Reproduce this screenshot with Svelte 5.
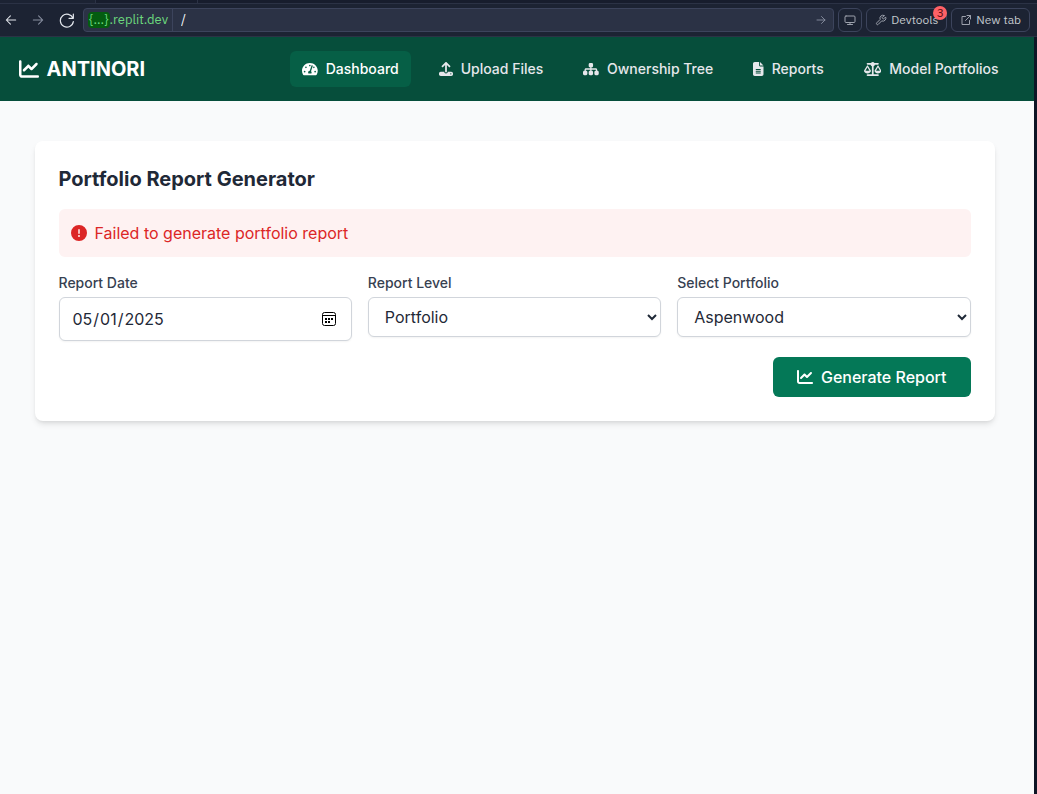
<script>
  const icons = {
    chart: { w: 512, d: 'M64 64c0-17.7-14.3-32-32-32S0 46.3 0 64V400c0 44.2 35.8 80 80 80H480c17.7 0 32-14.3 32-32s-14.3-32-32-32H80c-8.8 0-16-7.2-16-16V64zm406.6 86.6c12.5-12.5 12.5-32.8 0-45.3s-32.8-12.5-45.3 0L320 210.7l-57.4-57.4c-12.5-12.5-32.8-12.5-45.3 0l-112 112c-12.5 12.5-12.5 32.8 0 45.3s32.8 12.5 45.3 0L240 221.3l57.4 57.4c12.5 12.5 32.8 12.5 45.3 0l128-128z' },
    gauge: { w: 576, d: 'M288 32C128.94 32 0 160.94 0 320c0 52.8 14.25 102.26 39.06 144.8 5.61 9.62 16.3 15.2 27.44 15.2h443c11.14 0 21.83-5.58 27.44-15.2C561.75 422.26 576 372.8 576 320c0-159.06-128.94-288-288-288zm0 64c14.71 0 26.58 10.13 30.32 23.65-1.11 2.26-2.64 4.23-3.45 6.67l-9.22 27.67c-5.13 3.49-10.97 6.01-17.64 6.01-17.67 0-32-14.33-32-32S270.33 96 288 96zM96 384c-17.67 0-32-14.33-32-32s14.33-32 32-32 32 14.33 32 32-14.33 32-32 32zm48-160c-17.67 0-32-14.33-32-32s14.33-32 32-32 32 14.33 32 32-14.33 32-32 32zm246.77-72.41l-61.33 184C343.13 347.33 352 364.54 352 384c0 11.72-3.38 22.55-8.88 32H232.88c-5.5-9.45-8.88-20.28-8.88-32 0-33.94 26.5-61.43 59.9-63.59l61.34-184.01c4.17-12.56 17.73-19.45 30.36-15.17 12.57 4.19 19.35 17.79 15.17 30.36zm14.66 57.2l15.52-46.55c3.47-1.29 7.13-2.23 11.05-2.23 17.67 0 32 14.33 32 32s-14.33 32-32 32c-11.38-.01-20.89-6.28-26.57-15.22zM480 384c-17.67 0-32-14.33-32-32s14.33-32 32-32 32 14.33 32 32-14.33 32-32 32z' },
    upload: { w: 512, d: 'M288 109.3V352c0 17.7-14.3 32-32 32s-32-14.3-32-32V109.3l-73.4 73.4c-12.5 12.5-32.8 12.5-45.3 0s-12.5-32.8 0-45.3l128-128c12.5-12.5 32.8-12.5 45.3 0l128 128c12.5 12.5 12.5 32.8 0 45.3s-32.8 12.5-45.3 0L288 109.3zM64 352H192c0 35.3 28.7 64 64 64s64-28.7 64-64H448c35.3 0 64 28.7 64 64v32c0 35.3-28.7 64-64 64H64c-35.3 0-64-28.7-64-64V416c0-35.3 28.7-64 64-64zM432 456a24 24 0 1 0 0-48 24 24 0 1 0 0 48z' },
    tree: { w: 576, d: 'M208 80c0-26.5 21.5-48 48-48h64c26.5 0 48 21.5 48 48v64c0 26.5-21.5 48-48 48h-8v40H464c30.9 0 56 25.1 56 56v32h8c26.5 0 48 21.5 48 48v64c0 26.5-21.5 48-48 48H464c-26.5 0-48-21.5-48-48V368c0-26.5 21.5-48 48-48h8V288c0-4.4-3.6-8-8-8H312v40h8c26.5 0 48 21.5 48 48v64c0 26.5-21.5 48-48 48H256c-26.5 0-48-21.5-48-48V368c0-26.5 21.5-48 48-48h8V280H112c-4.4 0-8 3.6-8 8v32h8c26.5 0 48 21.5 48 48v64c0 26.5-21.5 48-48 48H48c-26.5 0-48-21.5-48-48V368c0-26.5 21.5-48 48-48h8V288c0-30.9 25.1-56 56-56H264V192h-8c-26.5 0-48-21.5-48-48V80z' },
    file: { w: 384, d: 'M64 0C28.7 0 0 28.7 0 64V448c0 35.3 28.7 64 64 64H320c35.3 0 64-28.7 64-64V160H256c-17.7 0-32-14.3-32-32V0H64zM256 0V128H384L256 0zM112 256H272c8.8 0 16 7.2 16 16s-7.2 16-16 16H112c-8.8 0-16-7.2-16-16s7.2-16 16-16zm0 64H272c8.8 0 16 7.2 16 16s-7.2 16-16 16H112c-8.8 0-16-7.2-16-16s7.2-16 16-16zm0 64H272c8.8 0 16 7.2 16 16s-7.2 16-16 16H112c-8.8 0-16-7.2-16-16s7.2-16 16-16z' },
    scale: { w: 640, d: 'M384 32H512c17.7 0 32 14.3 32 32s-14.3 32-32 32H398.4c-5.2 25.8-22.9 47.1-46.4 57.3V448H512c17.7 0 32 14.3 32 32s-14.3 32-32 32H320 128c-17.7 0-32-14.3-32-32s14.3-32 32-32H288V153.3c-23.5-10.3-41.2-31.6-46.4-57.3H128c-17.7 0-32-14.3-32-32s14.3-32 32-32H256c14.6-19.4 37.8-32 64-32s49.4 12.6 64 32zm55.6 288H584.4L512 195.8 439.6 320zM512 416c-62.9 0-115.2-34-126-78.9c-2.6-11 1-22.3 6.7-32.1l95.2-163.2c5-8.6 14.2-13.8 24.1-13.8s19.1 5.3 24.1 13.8l95.2 163.2c5.7 9.8 9.3 21.1 6.7 32.1C627.2 382 574.9 416 512 416zM126.8 195.8L54.4 320H199.3L126.8 195.8zM.9 337.1c-2.6-11 1-22.3 6.7-32.1l95.2-163.2c5-8.6 14.2-13.8 24.1-13.8s19.1 5.3 24.1 13.8l95.2 163.2c5.7 9.8 9.3 21.1 6.7 32.1C242 382 189.7 416 126.8 416S11.7 382 .9 337.1z' },
    alert: { w: 512, d: 'M256 512A256 256 0 1 0 256 0a256 256 0 1 0 0 512zm0-384c13.3 0 24 10.7 24 24V264c0 13.3-10.7 24-24 24s-24-10.7-24-24V152c0-13.3 10.7-24 24-24zM224 352a32 32 0 1 1 64 0 32 32 0 1 1 -64 0z' }
  };

  const links = [
    { label: 'Dashboard', icon: 'gauge', active: true },
    { label: 'Upload Files', icon: 'upload' },
    { label: 'Ownership Tree', icon: 'tree' },
    { label: 'Reports', icon: 'file' },
    { label: 'Model Portfolios', icon: 'scale' }
  ];

  let date = $state('2025-05-01');
  let level = $state('Portfolio');
  let portfolio = $state('Aspenwood');
  let path = $state('/');
</script>

{#snippet icon(name)}
  <svg class="icon" viewBox="0 0 {icons[name].w} 512" style:width="{icons[name].w / 512}em" aria-hidden="true">
    <path d={icons[name].d} />
  </svg>
{/snippet}

{#snippet line(d)}
  <svg class="line" viewBox="0 0 24 24" aria-hidden="true"><path {d} /></svg>
{/snippet}

<div class="shell">
  <div class="tabs"><span></span><span></span></div>
  <div class="toolbar">
    <button class="plain" aria-label="Back">{@render line('M20 12H4M11 5l-7 7 7 7')}</button>
    <button class="plain dim" aria-label="Forward">{@render line('M4 12h16M13 5l7 7-7 7')}</button>
    <button class="plain reload" aria-label="Reload">{@render line('M21.5 3v6.5H15M21 9.500A9.800 9.800 0 1 0 21.500 14.500')}</button>
    <div class="address">
      <span class="host"><mark>{'{...}'}</mark>.replit.dev</span>
      <input aria-label="Path" bind:value={path} />
      <button class="plain dim go" aria-label="Go">{@render line('M4 12h16M13 5l7 7-7 7')}</button>
    </div>
    <button class="tool muted" aria-label="Resize">{@render line('M4 4h16a2 2 0 0 1 2 2v9a2 2 0 0 1-2 2H4a2 2 0 0 1-2-2V6a2 2 0 0 1 2-2zM12 17v4M7 21h10')}</button>
    <button class="tool">
      {@render line('M14.500 6.500a1 1 0 0 0 0 1.500l1.600 1.600a1 1 0 0 0 1.500 0l3.700-3.700a6 6 0 0 1-7.900 7.900l-6.900 6.900a2.100 2.100 0 0 1-3-3l6.900-6.900a6 6 0 0 1 7.900-7.900z')}Devtools
      <span class="badge">3</span>
    </button>
    <button class="tool">{@render line('M11 5H4v16h15v-8M14 3h7v7M21 3L11 13')}New tab</button>
  </div>

  <div class="page">
    <header>
      <div class="container bar">
        <div class="brand">{@render icon('chart')}ANTINORI</div>
        <nav>
          {#each links as link}
            <a href="#/" class:active={link.active}>{@render icon(link.icon)}{link.label}</a>
          {/each}
        </nav>
      </div>
    </header>

    <main>
      <section class="card">
        <h1>Portfolio Report Generator</h1>
        <p class="error" role="alert">{@render icon('alert')}Failed to generate portfolio report</p>
        <form onsubmit={(e) => e.preventDefault()}>
          <div class="fields">
            <div class="field">
              <label for="date">Report Date</label>
              <input id="date" type="date" bind:value={date} />
            </div>
            <div class="field">
              <label for="level">Report Level</label>
              <select id="level" bind:value={level}><option>Portfolio</option></select>
            </div>
            <div class="field">
              <label for="portfolio">Select Portfolio</label>
              <select id="portfolio" bind:value={portfolio}><option>Aspenwood</option></select>
            </div>
          </div>
          <button class="submit">{@render icon('chart')}Generate Report</button>
        </form>
      </section>
    </main>
  </div>
</div>

<style>
  :global(body) {
    margin: 0;
    background: #0e1525;
  }
  .shell, .shell * {
    box-sizing: border-box;
  }
  .shell {
    min-height: 100vh;
    display: flex;
    flex-direction: column;
    font-family: Inter, sans-serif;
    color: #1f2937;
  }
  button, input, select {
    font: inherit;
    color: inherit;
    margin: 0;
  }
  button {
    cursor: pointer;
  }
  .icon {
    height: 1em;
    flex: none;
    fill: currentColor;
  }
  .line {
    width: 12px;
    height: 12px;
    flex: none;
    fill: none;
    stroke: currentColor;
    stroke-width: 2;
    stroke-linecap: round;
    stroke-linejoin: round;
  }

  .tabs {
    display: flex;
    height: 4px;
    padding-left: 95px;
    background: #1c2333;
    border-bottom: 1px solid #2b3245;
  }
  .tabs span {
    width: 102px;
    background: #171d2d;
    border-left: 1px solid #2b3245;
  }
  .tabs span + span {
    flex: 1;
  }
  .toolbar {
    display: flex;
    align-items: center;
    gap: 4px;
    height: 33px;
    padding: 0 7px 0 0;
    background: #1c2333;
    border-bottom: 1px solid #2b3245;
    font-family: "IBM Plex Sans", Inter, sans-serif;
    font-size: 12px;
    line-height: 16px;
    color: #c2c8cc;
  }
  .plain {
    display: flex;
    align-items: center;
    justify-content: center;
    width: 24px;
    height: 24px;
    padding: 0;
    border: 0;
    background: none;
    color: #e2e6ec;
  }
  .plain:first-child {
    width: 22px;
  }
  .plain .line {
    width: 14px;
    height: 14px;
    stroke-width: 1.800;
  }
  .plain.reload {
    width: 25px;
  }
  .plain.reload .line {
    width: 16px;
    height: 16px;
  }
  .dim {
    color: #8a91a2;
  }
  .address {
    flex: 1;
    display: flex;
    align-items: center;
    height: 24px;
    min-width: 0;
    background: #2b3245;
    border: 1px solid #3c445c;
    border-radius: 4px;
    font-size: 13px;
  }
  .host {
    display: flex;
    align-items: center;
    align-self: stretch;
    padding: 0 4px;
    border-right: 1px solid #3c445c;
    color: #6cd97e;
  }
  mark {
    padding: 0 1px;
    border-radius: 4px;
    background: #045c10;
    color: inherit;
  }
  .address input {
    flex: 1;
    min-width: 0;
    padding: 0 8px;
    border: 0;
    outline: 0;
    background: none;
    color: #f5f9fc;
  }
  .plain.go .line {
    width: 12px;
    height: 12px;
  }
  .tool {
    position: relative;
    display: flex;
    align-items: center;
    gap: 4px;
    height: 24px;
    padding: 0 8px;
    border: 1px solid #3c445c;
    border-radius: 6px;
    background: none;
    white-space: nowrap;
  }
  .tool .line {
    color: #9da2ad;
  }
  .muted {
    padding: 0 5px;
  }
  .badge {
    position: absolute;
    top: -3px;
    right: -1px;
    width: 14px;
    height: 14px;
    border-radius: 50%;
    background: #ff6166;
    color: #5c0f12;
    font-size: 12px;
    line-height: 14px;
    text-align: center;
  }

  .page {
    flex: 1;
    margin-right: 3px;
    background: #f9fafb;
  }
  header, main {
    padding-right: 5px;
  }
  header {
    background: #064e3b;
  }
  .container {
    max-width: 1024px;
    margin: 0 auto;
    padding: 0 16px;
  }
  .bar {
    display: flex;
    align-items: center;
    justify-content: space-between;
    height: 64px;
    color: #fff;
  }
  .brand {
    display: flex;
    align-items: center;
    gap: 8px;
    font-size: 20px;
    line-height: 28px;
    font-weight: 700;
  }
  nav {
    display: flex;
    gap: 16px;
  }
  nav a {
    display: flex;
    align-items: center;
    gap: 8px;
    padding: 8px 12px;
    border-radius: 6px;
    font-size: 14px;
    line-height: 20px;
    font-weight: 500;
    color: #e5e7eb;
    text-decoration: none;
    white-space: nowrap;
  }
  nav a.active {
    background: #065f46;
    color: #fff;
  }
  main {
    padding-top: 40px;
    padding-bottom: 40px;
  }
  .card {
    max-width: 960px;
    margin: 0 auto;
    padding: 24px;
    border-radius: 8px;
    background: #fff;
    box-shadow: 0 4px 6px -1px rgb(0 0 0 / 0.1), 0 2px 4px -2px rgb(0 0 0 / 0.1);
  }
  h1 {
    margin: 0 0 16px;
    font-size: 20px;
    line-height: 28px;
    font-weight: 700;
  }
  .error {
    display: flex;
    align-items: center;
    gap: 8px;
    margin: 0 0 16px;
    padding: 12px;
    border-radius: 6px;
    background: #fef2f2;
    color: #dc2626;
    font-size: 16px;
    line-height: 24px;
  }
  form {
    display: flex;
    flex-direction: column;
    gap: 16px;
  }
  .fields {
    display: grid;
    grid-template-columns: repeat(3, minmax(0, 1fr));
    gap: 16px;
    align-items: start;
  }
  .field {
    display: flex;
    flex-direction: column;
    gap: 4px;
  }
  label {
    font-size: 14px;
    line-height: 20px;
    font-weight: 500;
    color: #374151;
  }
  .field input, .field select {
    width: 100%;
    padding: 8px 12px;
    border: 1px solid #d1d5db;
    border-radius: 6px;
    background: #fff;
    box-shadow: 0 1px 2px 0 rgb(0 0 0 / 0.05);
    font-size: 16px;
    line-height: 24px;
  }
  .field input {
    height: 44px;
  }
  .field input::-webkit-calendar-picker-indicator {
    background: url("data:image/svg+xml,%3Csvg xmlns='http://www.w3.org/2000/svg' viewBox='0 0 14 14'%3E%3Crect x='.5' y='.5' width='13' height='13' rx='2' fill='none' stroke='%23000'/%3E%3Cpath d='M1 3.500h12' stroke='%23000'/%3E%3Cpath d='M6 6h2v2H6zM9 6h2v2H9zM3 6h2v2H3zM3 9h2v2H3zM6 9h2v2H6z'/%3E%3C/svg%3E") center / 14px 14px no-repeat;
  }
  .field select {
    height: 40px;
  }
  .submit {
    display: flex;
    align-items: center;
    gap: 8px;
    align-self: flex-end;
    padding: 8px 24px;
    border: 0;
    border-radius: 6px;
    background: #047857;
    color: #fff;
    font-size: 16px;
    line-height: 24px;
    font-weight: 500;
  }
</style>
